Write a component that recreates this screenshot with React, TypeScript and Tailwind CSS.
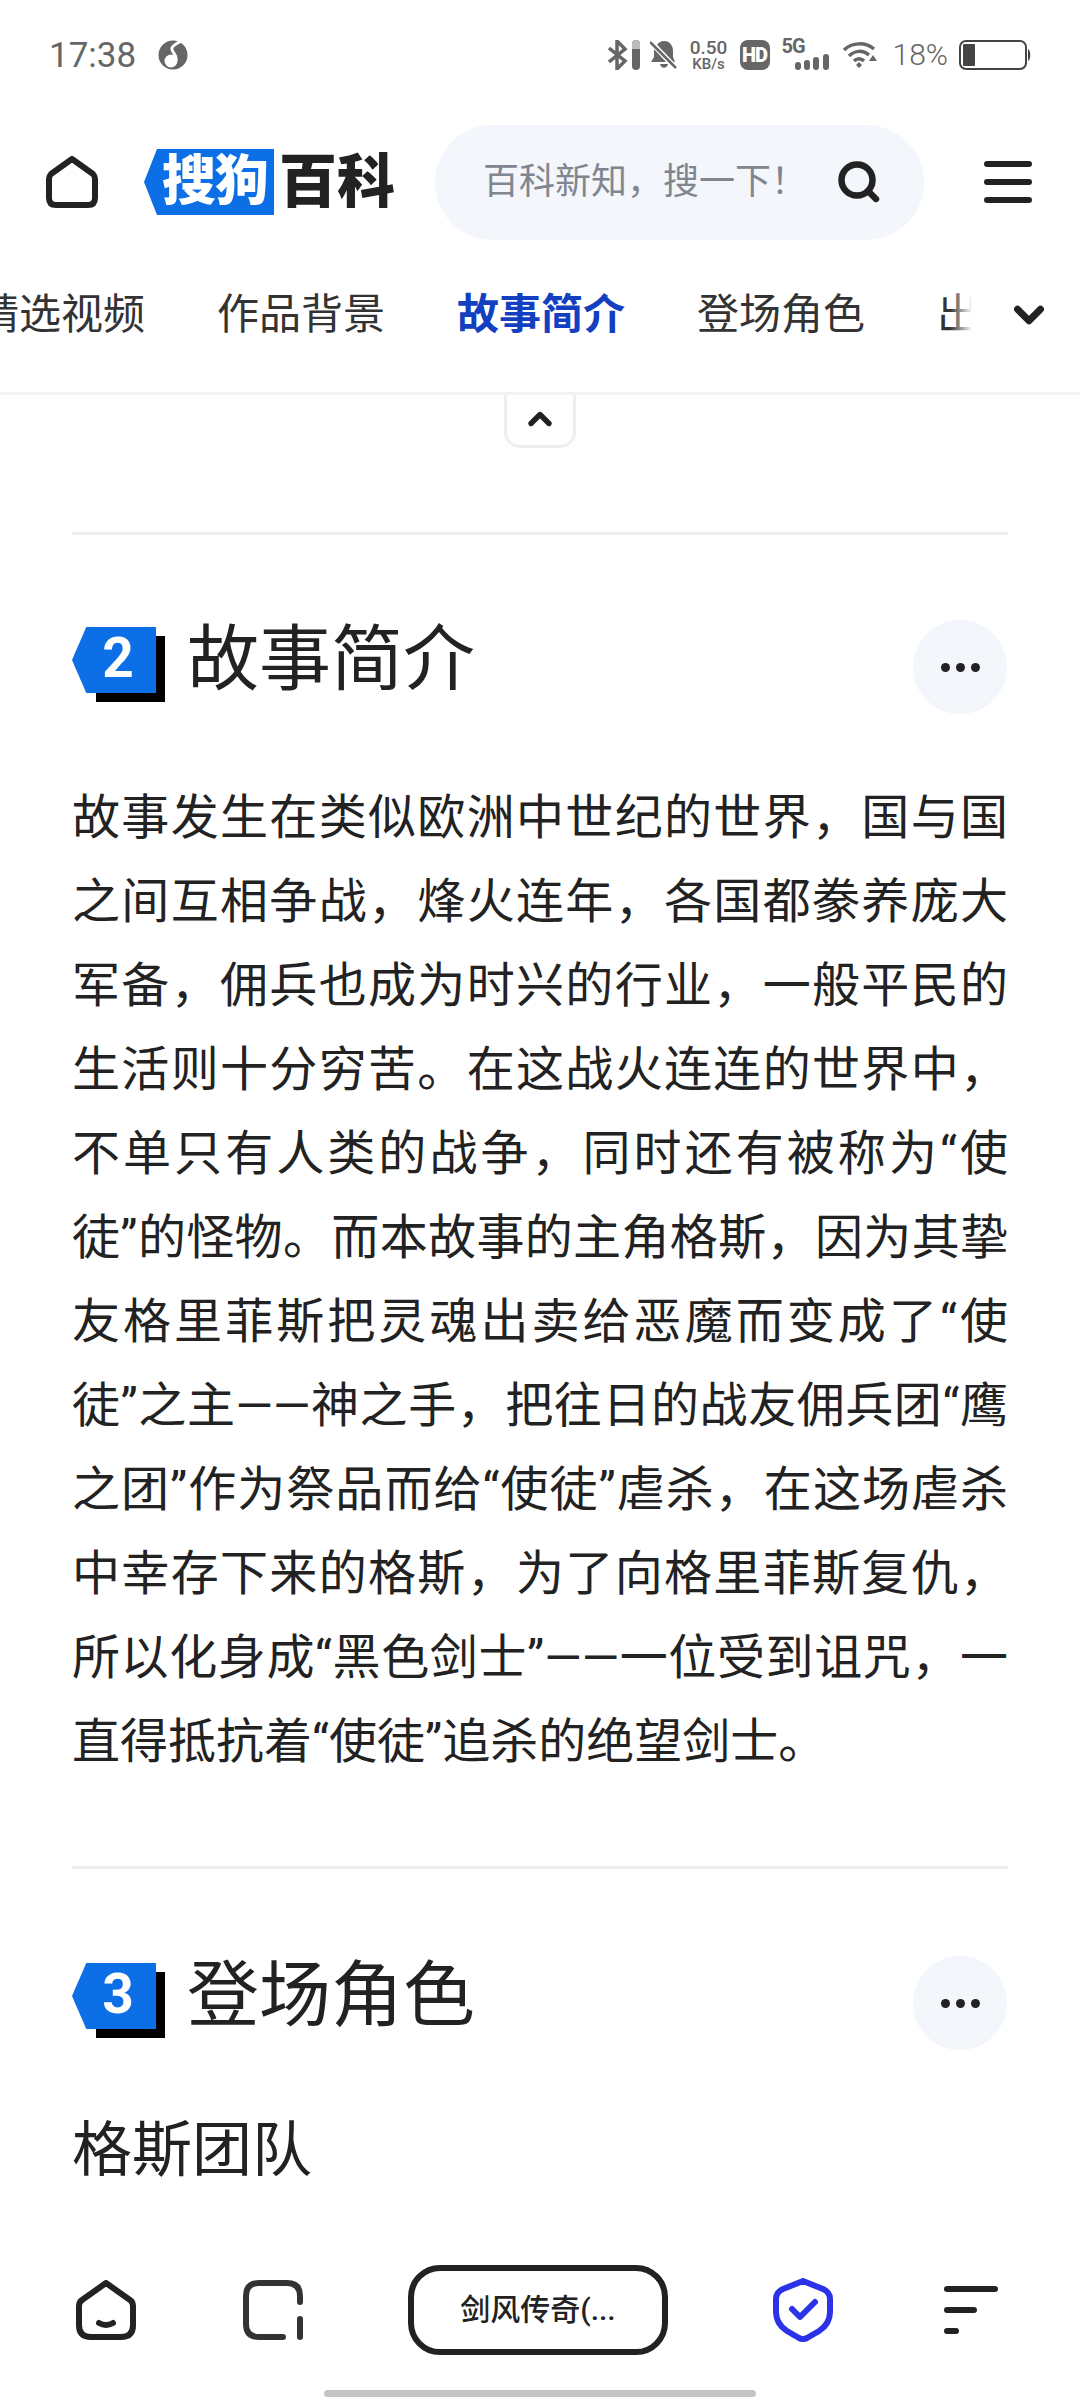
import { ChevronDown, ChevronUp } from 'lucide-react';

const paragraph =
  '故事发生在类似欧洲中世纪的世界，国与国之间互相争战，烽火连年，各国都豢养庞大军备，佣兵也成为时兴的行业，一般平民的生活则十分穷苦。在这战火连连的世界中，不单只有人类的战争，同时还有被称为“使徒”的怪物。而本故事的主角格斯，因为其挚友格里菲斯把灵魂出卖给恶魔而变成了“使徒”之主——神之手，把往日的战友佣兵团“鹰之团”作为祭品而给“使徒”虐杀，在这场虐杀中幸存下来的格斯，为了向格里菲斯复仇，所以化身成“黑色剑士”——一位受到诅咒，一直得抵抗着“使徒”追杀的绝望剑士。';

const tabs = ['精选视频', '作品背景', '故事简介', '登场角色', '出场作品'];

function StatusBar() {
  return (
    <div className="flex h-[100px] shrink-0 items-center pl-[49px] pr-[49px] pt-[10px] text-[#666]">
      <span className="text-[35px] leading-none">17:38</span>
      <svg className="ml-[22px]" width="30" height="30" viewBox="0 0 30 30">
        <circle cx="15" cy="15" r="14.5" fill="#666" />
        <path d="M18 20 C19 14 13 12 14 8 C15 5 19 4 24 0" fill="none" stroke="#fff" strokeWidth="3" />
        <circle cx="13" cy="21" r="6.5" fill="#fff" />
      </svg>
      <div className="ml-auto flex items-center">
        <svg width="32" height="30" viewBox="0 0 32 30">
          <path d="M1 8 L17 21 L9 29 V1 L17 9 L1 22" fill="none" stroke="#666" strokeWidth="3.5" />
          <rect x="24" y="0" width="8" height="30" rx="4" fill="#666" />
          <path d="M24 4 a4 4 0 0 1 8 0 V9 H24 Z" fill="#bbb" />
        </svg>
        <svg className="ml-[10px]" width="27" height="28" viewBox="0 0 27 28">
          <path d="M7 4 C9 1 11 0 14 0 C20 0 23 5 23 10 V16 L25 21 H21 Z M4 8 L16 21 H1 L4 16 Z M10 23 H18 C17 28 11 28 10 23 Z" fill="#666" />
          <path d="M0 0 L27 28" stroke="#fff" strokeWidth="5" />
          <path d="M0 1 L26 27" stroke="#666" strokeWidth="2.5" />
        </svg>
        <div className="ml-[14px] flex w-[36px] flex-col items-center font-medium leading-none">
          <span className="text-[19px] leading-[19px]">0.50</span>
          <span className="text-[15px] leading-[15px]">KB/s</span>
        </div>
        <div className="ml-[13px] flex h-[30px] w-[30px] items-center justify-center rounded-[8px] bg-[#666] text-[20px] font-black leading-none tracking-[-1px] text-white">
          HD
        </div>
        <div className="relative ml-[12px] h-[32px] w-[47px]">
          <span className="absolute left-0 top-[-3px] text-[20px] font-bold leading-[20px] tracking-[-1px]">5G</span>
          <svg className="absolute bottom-0 left-0" width="47" height="32" viewBox="0 0 47 32">
            <rect x="13" y="23" width="6" height="8" rx="3" fill="#666" />
            <rect x="22" y="21" width="6" height="10" rx="3" fill="#666" />
            <rect x="31" y="18" width="6" height="13" rx="3" fill="#666" />
            <rect x="41" y="15" width="6" height="16" rx="3" fill="#666" />
          </svg>
        </div>
        <svg className="ml-[13px]" width="36" height="28" viewBox="0 0 36 28">
          <path d="M2 9 C10 1 24 1 32 8" fill="none" stroke="#666" strokeWidth="3.5" />
          <path d="M7 15 C13 9 21 9 27 14" fill="none" stroke="#666" strokeWidth="3.5" />
          <path d="M12 20 C15 17 19 17 22 20" fill="none" stroke="#666" strokeWidth="3.5" />
          <path d="M14 24 L17 21 L20 24 L17 27 Z M31 14 L35 20 H27 Z" fill="#666" />
        </svg>
        <span className="ml-[15px] text-[30px] font-light leading-none">18%</span>
        <svg className="ml-[11px]" width="72" height="30" viewBox="0 0 72 30">
          <rect x="1" y="1" width="66" height="28" rx="6" fill="none" stroke="#444" strokeWidth="2" />
          <rect x="4" y="4" width="12" height="22" rx="1" fill="#444" />
          <path d="M69 9 C72 10 72 20 69 21 Z" fill="#444" />
        </svg>
      </div>
    </div>
  );
}

function Header() {
  return (
    <div className="flex h-[164px] shrink-0 items-center pl-[46px]">
      <svg width="52" height="52" viewBox="0 0 52 52" className="shrink-0">
        <path d="M26 3 L47 18 Q49 20 49 23 V42 Q49 49 42 49 H10 Q3 49 3 42 V23 Q3 20 5 18 Z" fill="none" stroke="#222" strokeWidth="6" strokeLinejoin="round" />
      </svg>
      <div className="ml-[46px] flex h-[66px] w-[130px] shrink-0 items-center justify-end bg-[#0d6fe6] pr-[6px] text-[54px] font-black leading-none tracking-[-1px] text-white [clip-path:polygon(10%_0,100%_0,100%_100%,10%_100%,0_50%)]">
        搜狗
      </div>
      <span className="ml-[5px] w-[116px] shrink-0 whitespace-nowrap text-[58px] font-black leading-none text-[#222]">百科</span>
      <div className="ml-[40px] flex h-[115px] w-[489px] shrink-0 items-center rounded-full bg-[#f3f6fb] pl-[48px]">
        <span className="text-[36px] leading-none text-[#80868f]">百科新知，搜一下！</span>
        <svg className="ml-auto mr-[44px]" width="42" height="42" viewBox="0 0 42 42">
          <circle cx="19" cy="19" r="15.5" fill="none" stroke="#222" strokeWidth="6.5" />
          <path d="M30 30 L38 38" stroke="#222" strokeWidth="6.5" strokeLinecap="round" />
        </svg>
      </div>
      <div className="ml-[60px] flex w-[48px] shrink-0 flex-col gap-[12px]">
        <div className="h-[6px] rounded-full bg-[#222]" />
        <div className="h-[6px] rounded-full bg-[#222]" />
        <div className="h-[6px] rounded-full bg-[#222]" />
      </div>
    </div>
  );
}

function TabBar() {
  return (
    <div className="relative h-[131px] shrink-0 overflow-hidden border-b-[3px] border-[#f3f3f3] pt-[21px]">
      <div className="ml-[-23px] flex gap-[72px]">
        {tabs.map((tab) => (
          <span
            key={tab}
            className={`shrink-0 text-[42px] leading-[60px] ${tab === '故事简介' ? 'font-bold text-[#1240c0]' : 'text-[#333]'}`}
          >
            {tab}
          </span>
        ))}
      </div>
      <div className="absolute bottom-0 right-0 top-0 flex w-[130px] items-start justify-end bg-[linear-gradient(to_right,transparent,white_17%)] pr-[28px] pt-[28px]">
        <ChevronDown size={46} strokeWidth={3.6} color="#222" />
      </div>
    </div>
  );
}

function SectionHeading({ num, title }: { num: number; title: string }) {
  return (
    <div className="flex items-start justify-between">
      <div className="mt-[7px] flex h-[66px] items-center gap-[31px]">
        <div className="relative h-[66px] w-[84px]">
          <div className="absolute bottom-[-9px] left-[24px] right-[-9px] top-[9px] bg-black" />
          <div className="absolute inset-0 flex items-center justify-center bg-[#0d6fe6] pb-[3px] pl-[8px] text-[55px] font-bold leading-none text-white [clip-path:polygon(17%_0,100%_0,100%_100%,17%_100%,0_50%)]">
            {num}
          </div>
        </div>
        <h2 className="text-[72px] font-normal leading-none text-[#222]">{title}</h2>
      </div>
      <div className="mr-[1px] flex h-[94px] w-[94px] items-center justify-center gap-[6px] rounded-full bg-[#f3f6fb]">
        <div className="h-[9px] w-[9px] rounded-full bg-[#222]" />
        <div className="h-[9px] w-[9px] rounded-full bg-[#222]" />
        <div className="h-[9px] w-[9px] rounded-full bg-[#222]" />
      </div>
    </div>
  );
}

function Content() {
  return (
    <div className="min-h-0 flex-1 overflow-hidden">
      <div className="mx-auto flex h-[53px] w-[72px] items-center justify-center rounded-b-[16px] border-[3px] border-t-0 border-[#eee] pb-[3px]">
        <ChevronUp size={36} strokeWidth={3.6} color="#222" />
      </div>
      <div className="px-[72px]">
        <div className="mt-[84px] h-[3px] bg-[#eee]" />
        <div className="mt-[85px]">
          <SectionHeading num={2} title="故事简介" />
        </div>
        <p className="mt-[62px] text-justify text-[48px] leading-[84px] text-[#222]">{paragraph}</p>
        <div className="mt-[82px] h-[3px] bg-[#eee]" />
        <div className="mt-[87px]">
          <SectionHeading num={3} title="登场角色" />
        </div>
        <p className="mt-[59px] text-[60px] leading-[84px] text-[#222]">格斯团队</p>
      </div>
    </div>
  );
}

function BottomNav() {
  return (
    <div className="relative h-[170px] shrink-0 bg-white">
      <div className="flex h-[136px] items-center pl-[76px] pt-[24px]">
        <svg width="60" height="60" viewBox="0 0 60 60">
          <path d="M30 3 L54 20 Q57 22 57 26 V45 Q57 57 45 57 H15 Q3 57 3 45 V26 Q3 22 6 20 Z" fill="none" stroke="#222" strokeWidth="6" strokeLinejoin="round" />
          <path d="M23 43 Q30 47 37 43" fill="none" stroke="#222" strokeWidth="6" strokeLinecap="round" />
        </svg>
        <svg className="ml-[107px]" width="60" height="60" viewBox="0 0 60 60">
          <path d="M40 57 H16 Q3 57 3 44 V16 Q3 3 16 3 H44 Q57 3 57 16 V22" fill="none" stroke="#333" strokeWidth="6" strokeLinecap="round" />
          <path d="M57 39 V57" fill="none" stroke="#333" strokeWidth="6" strokeLinecap="round" />
        </svg>
        <div className="ml-[105px] flex h-[90px] w-[260px] items-center justify-center rounded-[32px] border-[6px] border-[#222] text-[30px] font-medium leading-none text-[#222]">
          剑风传奇(...
        </div>
        <svg className="ml-[105px]" width="60" height="64" viewBox="0 0 60 64">
          <path d="M30 3 L50 11 Q57 14 57 21 V34 Q57 46 46 53 L34 60 Q30 62 26 60 L14 53 Q3 46 3 34 V21 Q3 14 10 11 Z" fill="none" stroke="#2b32e8" strokeWidth="6" strokeLinejoin="round" />
          <path d="M19 31 L27 39 L42 24" fill="none" stroke="#2b32e8" strokeWidth="6" strokeLinecap="round" strokeLinejoin="round" />
        </svg>
        <div className="ml-[111px] flex w-[54px] flex-col gap-[15px]">
          <div className="h-[6px] w-[54px] rounded-full bg-[#222]" />
          <div className="h-[6px] w-[33px] rounded-full bg-[#222]" />
          <div className="h-[6px] w-[15px] rounded-full bg-[#222]" />
        </div>
      </div>
      <div className="absolute bottom-[3px] left-[324px] h-[7px] w-[432px] rounded-full bg-[#c4c4c4]" />
    </div>
  );
}

export default function App() {
  return (
    <div className="flex h-[2400px] w-[1080px] flex-col overflow-hidden bg-white [font-family:Roboto,'Noto_Sans_CJK_SC',sans-serif]">
      <StatusBar />
      <Header />
      <TabBar />
      <Content />
      <BottomNav />
    </div>
  );
}
